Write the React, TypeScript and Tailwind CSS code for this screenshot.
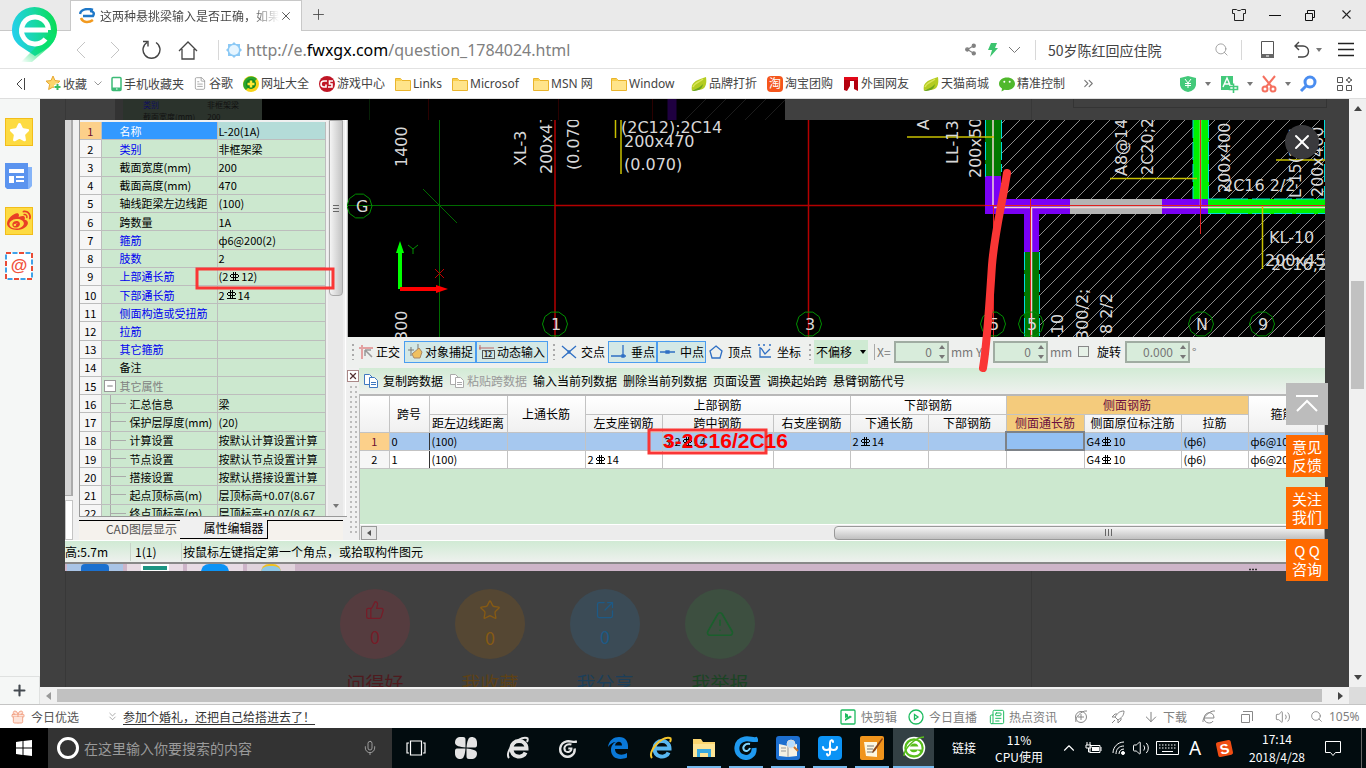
import React from 'react';
import {
  AlertTriangle, ArrowDown, ChevronDown, ChevronsDown, ChevronsRight, ChevronUp, FileText, Gift, Mic,
  Minus, Newspaper, Plus, Search, Share2, SquareArrowOutUpRight, Star, ThumbsUp, Volume2, X,
} from 'lucide-react';
import { FaWeibo } from 'react-icons/fa';

const PROPS: { name: string; value: string; kind?: 'blue' | 'group' | 'child' }[] = [
  { name: '名称', value: 'L-20(1A)' },
  { name: '类别', value: '非框架梁', kind: 'blue' },
  { name: '截面宽度(mm)', value: '200' },
  { name: '截面高度(mm)', value: '470' },
  { name: '轴线距梁左边线距', value: '(100)' },
  { name: '跨数量', value: '1A' },
  { name: '箍筋', value: 'ф6@200(2)', kind: 'blue' },
  { name: '肢数', value: '2', kind: 'blue' },
  { name: '上部通长筋', value: '(2#12)', kind: 'blue' },
  { name: '下部通长筋', value: '2#14', kind: 'blue' },
  { name: '侧面构造或受扭筋', value: '', kind: 'blue' },
  { name: '拉筋', value: '', kind: 'blue' },
  { name: '其它箍筋', value: '', kind: 'blue' },
  { name: '备注', value: '' },
  { name: '其它属性', value: '', kind: 'group' },
  { name: '汇总信息', value: '梁', kind: 'child' },
  { name: '保护层厚度(mm)', value: '(20)', kind: 'child' },
  { name: '计算设置', value: '按默认计算设置计算', kind: 'child' },
  { name: '节点设置', value: '按默认节点设置计算', kind: 'child' },
  { name: '搭接设置', value: '按默认搭接设置计算', kind: 'child' },
  { name: '起点顶标高(m)', value: '层顶标高+0.07(8.67', kind: 'child' },
  { name: '终点顶标高(m)', value: '层顶标高+0.07(8.67', kind: 'child' },
];

const SPANS = [
  ['0', '(100)', '', '', '3-2#14', '', '2#14', '', '', 'G4#10', '(ф6)', 'ф6@100', ''],
  ['1', '(100)', '', '2#14', '', '', '', '', '', 'G4#10', '(ф6)', 'ф6@200', ''],
];

// "#" stands for the grade-3 rebar mark
const RebarText = ({ text }: { text: string }) => (
  <span className="inline-flex items-center whitespace-nowrap">
    {text.split('#').map((part, i) => (
      <React.Fragment key={i}>
        {i > 0 && (
          <svg className="mx-px" width="11" height="11" viewBox="0 0 11 11" fill="none" stroke="currentColor">
            <path d="M4.500 1v8M6.500 1v8M2 3.500h7M2 6.500h7M1.500 4v2M9.500 4v2M1 9.500h9" />
          </svg>
        )}
        <span>{part}</span>
      </React.Fragment>
    ))}
  </span>
);

const Folder = () => (
  <svg width="16" height="16" viewBox="0 0 16 16">
    <path d="M.5 2.500h5l1.500 2h8.500v10H.5z" fill="#ffe48a" stroke="#e9b42c" />
    <path d="M1 3h4.300l1.500 2H1z" fill="#f9cf4b" />
  </svg>
);

const Leaf = () => (
  <svg width="16" height="16" viewBox="0 0 16 16">
    <path d="M1 15C-1 6 6 4 15 1c1 7 0 13-8 13-3 0-4-1-6 1z" fill="#b4cc22" />
    <path d="M1 15c3-2 8-3 11-7-1 6-5 7-11 7z" fill="#6ca51c" />
    <path d="M2 11C4 6 9 6 12 3" fill="none" stroke="#dbe65a" strokeWidth="1.500" />
  </svg>
);

const PhoneMark = () => (
  <svg width="12" height="16" viewBox="0 0 12 16" fill="none">
    <rect x="1" y="1.500" width="9" height="13" rx="1" stroke="#3dbb77" strokeWidth="1.500" />
    <path d="M1 11.500h9v3H1z" fill="#3dbb77" />
    <path d="M5 13h1.500" stroke="#fff" />
  </svg>
);

const StarMark = () => (
  <svg width="17" height="17" viewBox="0 0 17 17">
    <path d="M8 1l2 4.600 5 .5-3.700 3.400 1 5L8 12l-4.400 2.500 1-5L1 6.100l5-.5z" fill="#fcd56b" stroke="#e7a832" />
    <path d="M12.500 8.500v7M9 12h7" stroke="#fff" strokeWidth="4" />
    <path d="M12.500 9v6M9.500 12h6" stroke="#3dbb5f" strokeWidth="2" />
  </svg>
);

const SafeMark = () => (
  <svg width="16" height="16" viewBox="0 0 16 16">
    <circle cx="8" cy="8" r="8" fill="#f7d417" />
    <path d="M1 12A8 8 0 0 1 14 3L3 14z" fill="#2aa52c" />
    <circle cx="8" cy="8" r="5" fill="#148a21" />
    <path d="M8 4.500v7M4.500 8h7" stroke="#ffe936" strokeWidth="2.500" />
  </svg>
);

const GameMark = () => (
  <svg width="16" height="16" viewBox="0 0 16 16" fill="none">
    <circle cx="8" cy="8" r="8" fill="#c01626" />
    <path d="M8 5H5a3 3 0 0 0 0 6h2V8.500M14 5h-3.500v3H13v3H9" stroke="#fff" strokeWidth="1.600" />
  </svg>
);

const BannerMark = () => (
  <svg width="16" height="16" viewBox="0 0 16 16">
    <path d="M1 1h14v14l-4-2V5H7v5l-3 5-3-1z" fill="#b3000f" />
    <path d="M1 1h14v3H1z" fill="#e00818" />
  </svg>
);

const ChatMark = () => (
  <svg width="16" height="16" viewBox="0 0 16 16">
    <path d="M8 1.500c4.500 0 8 2.700 8 6.200s-3.500 6.300-8 6.300c-.8 0-1.600-.1-2.300-.3L2.500 15.500l.5-3C1.200 11.300 0 9.600 0 7.700 0 4.200 3.500 1.500 8 1.500z" fill="#50b82c" />
    <circle cx="5.300" cy="5.800" r="1" fill="#fff" />
    <circle cx="10.700" cy="5.800" r="1" fill="#fff" />
  </svg>
);

const TaoMark = () => <span className="grid size-4 place-items-center rounded-sm bg-[#f5561d] text-[12px] leading-none text-white">淘</span>;

const BOOKMARKS = [
  { icon: <FileText size={15} strokeWidth={1.2} color="#888" />, label: '谷歌', width: 'w-10' },
  { icon: <SafeMark />, label: '网址大全', width: 'w-[66px]' },
  { icon: <GameMark />, label: '游戏中心', width: 'w-[66px]' },
  { icon: <Folder />, label: 'Links', width: 'w-[47px]' },
  { icon: <Folder />, label: 'Microsof', width: 'w-[71px]' },
  { icon: <Folder />, label: 'MSN 网', width: 'w-[68px]' },
  { icon: <Folder />, label: 'Window', width: 'w-[70px]' },
  { icon: <Leaf />, label: '品牌打折', width: 'w-[66px]' },
  { icon: <TaoMark />, label: '淘宝团购', width: 'w-[66px]' },
  { icon: <BannerMark />, label: '外国网友', width: 'w-[70px]' },
  { icon: <Leaf />, label: '天猫商城', width: 'w-[66px]' },
  { icon: <ChatMark />, label: '精准控制', width: 'w-[66px]' },
];

const BrowserLogo = () => (
  <svg className="absolute left-3 top-1.5 z-10" width="46" height="58" viewBox="0 0 46 58">
    <defs>
      <linearGradient id="pin" x1="0" y1="0.600" x2="1" y2="0.400">
        <stop offset="0" stopColor="#25cff0" />
        <stop offset="0.550" stopColor="#18d8a4" />
        <stop offset="1" stopColor="#08dd55" />
      </linearGradient>
      <linearGradient id="tail" x1="1" y1="0" x2="0" y2="1">
        <stop offset="0.300" stopColor="#08e06b" />
        <stop offset="1" stopColor="#08e06b" stopOpacity="0" />
      </linearGradient>
    </defs>
    <path d="M22.500 1A22.500 22.500 0 0 1 45 24c0 8-4 13-8 17L23 50 8 40C3 36 0 31 0 24A22.500 22.500 0 0 1 22.500 1z" fill="url(#pin)" />
    <path d="M44 28c-1 7-5 11-8 14L20 56H9l28-28z" fill="url(#tail)" />
    <path d="M11 24h25M36.500 24a13.500 13.500 0 1 0-3 9" fill="none" stroke="#fff" strokeWidth="5" />
  </svg>
);

const Caret = () => <svg width="6" height="4" viewBox="0 0 6 4"><path d="M0 0h6L3 4z" fill="#777" /></svg>;

const TabStrip = () => (
  <div className="flex h-[31px] shrink-0 items-end border-b border-[#c8c8c8] bg-[#eaeaea]">
    <div className="-mb-px ml-[70px] flex h-[31px] w-[232px] items-center border-x border-t border-[#c8c8c8] bg-white pl-2 pr-2">
      <svg width="16" height="16" viewBox="0 0 16 16" fill="none">
        <path d="M1 6C2 1 9 0 14 2M4 8h10c2-3 0-5-3-5" stroke="#1f78c8" strokeWidth="2.500" />
        <path d="M2 10c2 5 8 5 12 2" stroke="#f29a1f" strokeWidth="2.500" />
      </svg>
      <span className="ml-[5px] w-[180px] overflow-hidden whitespace-nowrap bg-gradient-to-r from-[#444] from-85% to-transparent bg-clip-text text-xs text-transparent">这两种悬挑梁输入是否正确，如果</span>
      <button aria-label="关闭标签" className="ml-auto"><X size={14} strokeWidth={1.5} color="#444" /></button>
    </div>
    <button aria-label="新标签" className="mb-[7px] ml-2"><Plus size={17} strokeWidth={1.2} color="#444" /></button>
    <div className="mb-2 ml-auto mr-3 flex items-center gap-[23px] text-[#222]">
      <button aria-label="皮肤">
        <svg width="14" height="14" viewBox="0 0 14 14" fill="none" stroke="currentColor"><path d="M4.500 1.500h-4v4h2v7h9v-7h2v-4h-4c-1 1.500-4 1.500-5 0z" /></svg>
      </button>
      <button aria-label="最小化"><svg width="12" height="12"><path d="M0 6.500h12" stroke="#111" /></svg></button>
      <button aria-label="还原"><svg width="12" height="12" viewBox="0 0 12 12" fill="none" stroke="#111"><path d="M1.500 4.500h7v7h-7zM3.500 4V1.500h7v7H9" /></svg></button>
      <button aria-label="关闭"><X size={15} strokeWidth={1.7} /></button>
    </div>
  </div>
);

const AddressBar = () => (
  <div className="flex h-[38px] shrink-0 items-center border-b border-[#e2e2e2] pl-[72px] pr-3">
    <button aria-label="后退" className="w-[18px]"><svg width="18" height="18" viewBox="0 0 18 18" fill="none" stroke="#c4c4c4"><path d="M13 1L5 9l8 8" /></svg></button>
    <button aria-label="前进" className="ml-4 w-[18px]"><svg width="18" height="18" viewBox="0 0 18 18" fill="none" stroke="#c4c4c4"><path d="M5 1l8 8-8 8" /></svg></button>
    <button aria-label="刷新" className="ml-[18px]">
      <svg width="20" height="20" viewBox="0 0 20 20" fill="none" stroke="#444" strokeWidth="1.400"><path d="M5 2.500A8.500 8.500 0 1 0 14 2.500M1 1.500h5v5" /></svg>
    </button>
    <button aria-label="主页" className="ml-4">
      <svg width="20" height="20" viewBox="0 0 20 20" fill="none" stroke="#444" strokeWidth="1.300"><path d="M1 11l9-9 9 9M4 9v10h12V9" /></svg>
    </button>
    <span className="ml-5 h-5 w-px bg-[#d8d8d8]" />
    <svg className="ml-[7px]" width="16" height="16" viewBox="0 0 16 16">
      <path d="M8 0l2 2h4v4l2 2-2 2v4h-4l-2 2-2-2H2v-4L0 8l2-2V2h4z" fill="#8cc9f5" />
      <circle cx="8" cy="8" r="5" fill="#e6f5ff" />
    </svg>
    <p className="ml-1 flex-1 whitespace-nowrap font-['Noto_Sans'] text-base text-[#808080]">http://e.<span className="text-black">fwxgx.com</span>/question_1784024.html</p>
    <div className="flex items-center gap-2.5">
      <Share2 size={13} color="#808080" fill="#808080" />
      <svg width="11" height="14" viewBox="0 0 11 14"><path d="M4 0h6L8 5h3L3 14l2-7H1z" fill="#3cc46e" /></svg>
      <svg width="13" height="8" viewBox="0 0 13 8" fill="none" stroke="#777"><path d="M1 1l5.500 5.500L12 1" /></svg>
    </div>
    <span className="ml-3.5 h-5 w-px bg-[#d8d8d8]" />
    <input aria-label="搜索" defaultValue="50岁陈红回应住院" className="ml-3 w-[166px] text-sm text-[#444] outline-none" />
    <Search size={15} strokeWidth={1.2} color="#888" />
    <span className="ml-3 mr-[19px] h-5 w-px bg-[#d8d8d8]" />
    <svg width="13" height="17" viewBox="0 0 13 17"><path d="M.5.5h12v16H.5z" fill="none" stroke="#555" /><path d="M0 13h13v4H0z" fill="#666" /><path d="M5 15h3" stroke="#fff" /></svg>
    <svg className="ml-5" width="16" height="17" viewBox="0 0 16 17" fill="none" stroke="#444" strokeWidth="1.400"><path d="M5 1L1 5l4 4M1 5h8a5.500 5.500 0 0 1 0 11H4" /></svg>
    <span className="ml-1.5"><Caret /></span>
    <button aria-label="菜单" className="ml-4"><svg width="16" height="15"><path d="M0 1.500h16M0 7.500h16M0 13.500h16" stroke="#222" strokeWidth="1.300" /></svg></button>
  </div>
);

const BookmarkBar = () => (
  <div className="flex h-[30px] shrink-0 items-center border-b border-[#dedede] pl-[15px] pr-[13px] text-xs text-[#444]">
    <svg width="12" height="12" viewBox="0 0 12 12" fill="none" stroke="#444"><path d="M7 1L2 6l5 5M9.500 0v12" /></svg>
    <a href="#fav" className="ml-[18px] flex w-[49px] items-center gap-px"><StarMark />收藏</a>
    <svg width="8" height="5" viewBox="0 0 8 5" fill="none" stroke="#999"><path d="M.5.5L4 4 7.500.5" /></svg>
    <a href="#phone" className="ml-[9px] flex items-center gap-px"><PhoneMark />手机收藏夹</a>
    <nav className="ml-[9px] flex gap-2.5">
      {BOOKMARKS.map(b => (
        <a key={b.label} href="#bookmark" className={`${b.width} flex shrink-0 items-center gap-0.5 whitespace-nowrap font-['Noto_Sans','Noto_Sans_CJK_SC']`}>{b.icon}{b.label}</a>
      ))}
    </nav>
    <ChevronsRight className="ml-4" size={15} strokeWidth={1.7} color="#777" />
    <div className="ml-auto flex items-center gap-2">
      <svg width="18" height="18" viewBox="0 0 18 18"><path d="M9 1l8 2v6c0 4-3 7-8 8-5-1-8-4-8-8V3z" fill="#43c97a" /><path d="M6 4l3 4 3-4M9 8v5M6 8.500h6M6 10.500h6" stroke="#fff" fill="none" /></svg>
      <Caret />
      <svg width="20" height="18" viewBox="0 0 20 18">
        <path d="M2 1h12v9h-4v5H2z" fill="#43c97a" />
        <path d="M4 12l4-9 3 7M5.500 9H10" stroke="#fff" fill="none" strokeWidth="1.400" />
        <path d="M14.500 8.500V18M10.500 11.500h8v3h-8z" stroke="#43c97a" fill="#fff" strokeWidth="1.600" />
      </svg>
      <Caret />
      <svg width="16" height="18" viewBox="0 0 16 18" fill="none" stroke="#f5705f" strokeWidth="2"><path d="M2 1l9 11M14 1L5 12" /><circle cx="4" cy="14" r="2.500" /><circle cx="12" cy="14" r="2.500" /></svg>
      <Caret />
      <svg width="18" height="18" viewBox="0 0 18 18" fill="none" stroke="#4a8df0" strokeWidth="3"><circle cx="11" cy="7" r="5" /><path d="M7 11l-5 5" /></svg>
      <svg className="ml-3" width="16" height="16" viewBox="0 0 16 16" fill="none" stroke="#555"><path d="M.5 1.500h5v5h-5zM.5 9.500h5v5h-5zM9.500 9.500h5v5h-5zM12 1l1 2 2 1-2 1-1 2-1-2-2-1 2-1z" /></svg>
    </div>
  </div>
);

const Sidebar = () => (
  <aside className="flex w-10 shrink-0 flex-col bg-[#f5f7f6]">
    <div className="flex flex-col items-start gap-[17px] pl-[5px] pt-[19px]">
      <button aria-label="收藏" className="grid size-7 place-items-center border border-[#f2bd1a] bg-[#fddb42]"><Star size={21} color="#fff" fill="#fff" /></button>
      <button aria-label="新闻">
        <svg width="28" height="27" viewBox="0 0 28 27"><path d="M20 4h7v19l-3 3H3z" fill="#85b4f8" /><path d="M0 0h23v26H2l-2-2z" fill="#5b94ef" /><path d="M4 6h15v4H4zM4 13h5v7H4zM11 13h8v2h-8zM11 17h8v2h-8z" fill="#fff" /></svg>
      </button>
      <button aria-label="微博" className="grid size-7 place-items-center border border-[#f2bd1a] bg-[#fddb42]"><FaWeibo size={24} color="#e94025" /></button>
      <button aria-label="邮箱">
        <svg width="28" height="28" viewBox="0 0 28 28">
          <rect x="1" y="1" width="26" height="26" fill="#fff" stroke="#e94b35" strokeWidth="2" strokeDasharray="5 8" />
          <rect x="1" y="1" width="26" height="26" fill="none" stroke="#3fa2e8" strokeWidth="2" strokeDasharray="5 8" strokeDashoffset="-6.500" />
          <text x="14" y="19" fontSize="17" fontWeight="bold" textAnchor="middle" fill="#f0523c" fontFamily="Liberation Sans, sans-serif">@</text>
        </svg>
      </button>
    </div>
    <button aria-label="添加" className="mt-auto grid h-7 place-items-center border-r border-t border-[#dfe1e0]"><Plus size={17} strokeWidth={3} color="#444a50" /></button>
  </aside>
);

const ACTIONS = [
  { label: '问得好', count: '0', icon: <ThumbsUp size={20} strokeWidth={1.5} />, disc: 'bg-[#553c3f]', ink: 'text-[#761c28]', caption: 'text-[#4f1a1e]' },
  { label: '我收藏', count: '0', icon: <Star size={22} strokeWidth={1.5} />, disc: 'bg-[#554733]', ink: 'text-[#865a14]', caption: 'text-[#5e4216]' },
  { label: '我分享', count: '0', icon: <SquareArrowOutUpRight size={20} strokeWidth={1.5} />, disc: 'bg-[#3b4b56]', ink: 'text-[#1d5a86]', caption: 'text-[#1c3f5a]' },
  { label: '我举报', count: '', icon: <AlertTriangle size={30} strokeWidth={1.3} />, disc: 'bg-[#3d4f40]', ink: 'text-[#1a5f2c]', caption: 'text-[#1b4424]' },
];

const DimmedPage = () => (
  <div className="absolute inset-0 flex flex-col justify-between overflow-hidden bg-[#404040]">
    <div className="absolute inset-y-0 left-[25px] w-[967px] border-x border-[#383838]" />
    <div className="relative flex h-6 items-start justify-between pl-[75px] pr-[22px]">
      <div className="flex h-6 w-[670px] bg-black text-[8px] leading-3 text-[#111]">
        <div className="w-[147px] border-l-8 border-[#333] bg-[#2b332c] pl-5">
          <p><span className="mr-12 text-[#10105c]">类别</span>非框架梁</p>
          <p>截面宽度(mm)<span className="ml-3">200</span></p>
        </div>
        <svg className="flex-1" height="24" fill="none">
          <path d="M107.500 0v24" stroke="#062006" />
          <path d="M166.500 0v24M296.500 0v24M390.500 0v24" stroke="#2a0000" />
          <path d="M410 0v24" stroke="#1f0040" strokeWidth="9" />
          <path d="M420 24l24-24M440 24l24-24M460 24l24-24M480 24l24-24M500 24l24-24" stroke="#1c1c1c" />
        </svg>
      </div>
      <div className="h-[9px] w-[254px] border-x border-b border-[#343434]" />
    </div>
    <div className="relative flex h-[98px] gap-[45px] pl-[300px]">
      {ACTIONS.map(a => (
        <div key={a.label} className="flex w-[70px] shrink-0 flex-col items-center">
          <button className={`${a.disc} ${a.ink} flex h-[70px] w-[70px] shrink-0 flex-col items-center justify-center rounded-full text-lg leading-6`}>
            {a.icon}
            {a.count && <span className="mt-1">{a.count}</span>}
          </button>
          <span className={`${a.caption} mt-2.5 whitespace-nowrap text-[19px] leading-7`}>{a.label}</span>
        </div>
      ))}
    </div>
  </div>
);

const PropertyPanel = () => (
  <div className="flex w-[282px] shrink-0 bg-[#f0f0f0]">
    <div className="flex w-3.5 flex-col">
      <div className="h-[376px] w-2 border-b border-r-2 border-[#aaa] bg-[#d5d5d5]" />
      <div className="mt-1 w-2 flex-1 border border-[#c4c4c4] bg-white" />
    </div>
    <div className="flex flex-1 flex-col">
      <div className="flex h-[397px] overflow-hidden border-b border-l border-[#999]">
        <table className="mt-0.5 h-[401px] w-[246px] table-fixed border-collapse text-[11px] leading-4 text-black">
          <tbody>
            {PROPS.map((p, i) => (
              <tr key={p.name} className="bg-[#cce8cf]">
                <td className={`w-[21px] border-b border-r border-[#bdbdbd] p-0 text-center ${i === 0 ? 'bg-[#fcd08a] text-[#6b1030]' : 'bg-[#f6f6f6]'}`}>{i + 1}</td>
                <td className={`relative w-[116px] overflow-hidden whitespace-nowrap border-b border-r border-[#bdbdbd] p-0 ${p.kind === 'child' ? 'pl-7' : 'pl-[18px]'} ${i === 0 ? 'bg-[#3399ff] text-white' : ''} ${p.kind === 'blue' ? 'text-[#0000f0]' : ''} ${p.kind === 'group' ? 'text-[#808080]' : ''}`}>
                  {p.kind === 'group' && (
                    <button aria-label="折叠" className="absolute left-0.5 top-[3px] grid size-3 place-items-center border border-[#999] bg-white"><Minus size={8} color="#333" /></button>
                  )}
                  {p.kind === 'child' && (
                    <span className="absolute inset-y-0 left-2 w-4 border-l border-[#aaa]"><span className="mt-2 block h-px bg-[#aaa]" /></span>
                  )}
                  {p.name}
                </td>
                <td className={`overflow-hidden border-b border-r border-[#bdbdbd] p-0 pl-px ${i === 0 ? 'bg-[#b4dcd8]' : ''}`}><RebarText text={p.value} /></td>
              </tr>
            ))}
          </tbody>
        </table>
        <div className="ml-0.5 flex w-[15px] flex-col items-center justify-between bg-[#e8e8e8]">
          <div className="grid h-[176px] w-[14px] place-items-center rounded-b-sm border border-[#a8a8a8] bg-gradient-to-r from-[#f4f4f4] to-[#c4c4c4]">
            <svg width="6" height="8"><path d="M0 1.500h6M0 4.500h6M0 7.500h6" stroke="#666" /></svg>
          </div>
          <span className="mb-2"><Caret /></span>
        </div>
        <div className="ml-0.5 w-px bg-white" />
      </div>
      <div className="mr-1 mt-[3px] flex h-5 items-start border-t border-black bg-[#f5f2ed] text-[12px] leading-4">
        <button className="h-[19px] w-[101px] pb-1 pl-6 text-[#555]">CAD图层显示</button>
        <button className="-mt-px h-[19px] w-[88px] border-b border-r border-black bg-[#f0f0f0] pb-1 pl-5 text-black">属性编辑器</button>
      </div>
    </div>
  </div>
);

const AXES: [number, string][] = [[555, '1'], [809, '3'], [993, '5'], [1031, '5'], [1201, 'N'], [1262, '9']];

const UPRIGHT: [number, number, string][] = [
  [407, 167, '1400'], [407, 341, '300'], [526, 166, 'XL-3'], [552, 174, '200x470'], [579, 170, '(0.070)'],
  [929, 130, 'A'], [958, 164, 'LL-13'], [981, 178, '200x500'], [1127, 176, 'A8@14'], [1153, 175, '2C20;2'],
  [1230, 193, '200x400'], [1301, 198, 'L-15(2C1'], [1323, 197, '200x400'], [1063, 340, '-10'], [1088, 340, '300/2;'], [1112, 334, '8 2/2'],
];

const LEVEL: [number, number, string][] = [
  [621, 133, '(2C12);2C14'], [624, 147, '200x470'], [624, 170, '(0.070)'],
  [1223, 191, '2C16 2/2'], [1269, 243, 'KL-10'], [1265, 266, '200x450'], [1271, 270, '2C16;2'],
];

const ring = (cx: number, cy: number) =>
  Array.from({ length: 10 }, (_, i) => `${cx + 12.5 * Math.cos((i * Math.PI) / 5)},${cy + 12.5 * Math.sin((i * Math.PI) / 5)}`).join(' ');

const Drawing = () => (
  <svg className="block h-[217px] w-full bg-black" fontFamily="DejaVu Sans, sans-serif" fontSize="16">
    <defs>
      <pattern id="hatch" width="15" height="15" patternUnits="userSpaceOnUse">
        <path d="M-1 16L16 -1M-1 1L1 -1M14 16L16 14" stroke="#8c8c8c" />
      </pattern>
    </defs>
    <g transform="translate(-347 -120)" fill="none">
      <path d="M1001 120h192v79h-192zM1208 120h117v79h-117zM1039 214h286v123h-286z" fill="url(#hatch)" />
      <path d="M347.500 120v217" stroke="#bbb" />
      <path d="M347 205.500h208M439.500 120v217M423 189l34 34" stroke="#006a00" />
      <path d="M555 205.500h431M555 120v217M808.500 120v217" stroke="#b40000" strokeWidth="1.500" />
      <g fill="#007800">
        <path d="M985 120h16v57h-16zM1024 252h15v85h-15z" />
        <path d="M1193 120h16v79h-16zM1208 199h117v15h-117z" fill="#00f000" />
        <path d="M985 176h16v23h69v15h-31v38h-15v-38h-39zM1162 199h46v15h-46z" fill="#7a00f5" />
        <path d="M1070 199h92v15h-92z" fill="#b4b4b4" />
      </g>
      <path d="M985.500 120v57M1001.500 120v52M1024.500 252v85M1039.500 252v85M1193 120v79M1208.500 120v79M1208 199h117M1208 213.500h117M1324.500 120v79" stroke="#00dcdc" strokeDasharray="18 4" />
      <path d="M993 120v86M1200.500 120v86M994 207.500h331M1031.500 207v130" stroke="#f2d6d6" strokeWidth="1.500" />
      <path d="M985 205.500h340M993.500 206v131M1030.500 199v138M1200.500 120v114" stroke="#e02020" />
      <path d="M615.500 120v18M621 120v54M907 137h87M1110 178.500h87M1276 160h49M1262.500 206v63" stroke="#c8c000" strokeWidth="1.500" />
      <g fill="#d8d8d8">
        {UPRIGHT.map(([x, y, t]) => <text key={`${x}-${y}`} transform={`translate(${x} ${y}) rotate(-90)`}>{t}</text>)}
        {LEVEL.map(([x, y, t]) => <text key={`${x}-${y}`} x={x} y={y}>{t}</text>)}
        <text x="356" y="212">G</text>
        {AXES.map(([x, t]) => <text key={x} x={x + 1} y="330" textAnchor="middle">{t}</text>)}
      </g>
      <g stroke="#009000">
        <polygon points={ring(359.5, 206)} />
        {AXES.map(([x]) => <polygon key={x} points={ring(x, 324)} />)}
        <path d="M408 245l5 4 5-4M413 249v5" />
      </g>
      <path d="M400 289v-36" stroke="#00ff00" strokeWidth="4" />
      <path d="M396 253l4-12 4 12z" fill="#00ff00" />
      <path d="M400 289h38" stroke="#ff0000" strokeWidth="4" />
      <path d="M436 285l12 4-12 4z" fill="#ff0000" />
      <path d="M435 269l9 9M444 269l-9 9" stroke="#c00000" />
    </g>
  </svg>
);

const Grip = () => (
  <svg className="shrink-0" width="4" height="18"><path d="M2 1v16" stroke="#aaa" strokeWidth="2" strokeDasharray="2 3" /></svg>
);

const SnapIcon = ({ d }: { d: string }) => (
  <svg className="shrink-0" width="16" height="16" viewBox="0 0 16 16" fill="none" stroke="#2f6fc4" strokeWidth="1.300"><path d={d} /></svg>
);

const SNAPS = [
  { label: '交点', d: 'M1 2l14 12M15 2L1 14M7 7h2v2H7z', on: false },
  { label: '垂点', d: 'M0 12h15M12 1v11M11 11h2v2h-2z', on: true },
  { label: '中点', d: 'M0 8h15M6 7h3v2H6z', on: true },
  { label: '顶点', d: 'M8 2l6 5-2 7H4L2 7z', on: false },
  { label: '坐标', d: 'M3 3v10h11M4 4l4 6 5-5M1 1h2M6 1h2M12 1h2', on: false },
];

const Spin = ({ label, value, wide }: { label: string; value: string; wide?: boolean }) => (
  <span className="flex h-[22px] items-center border-2 border-[#a0aca2] bg-[#d8ecdb] pr-0.5">
    <input aria-label={label} defaultValue={value} className={`${wide ? 'w-[46px]' : 'w-9'} text-right text-[12px] text-[#777] outline-none`} />
    <svg className="ml-[7px]" width="6" height="14" viewBox="0 0 6 14" fill="#777"><path d="M0 4h6L3 0zM0 10h6l-3 4z" /></svg>
  </span>
);

const SnapToolbar = () => (
  <div className="flex h-[31px] items-center bg-[#eef0ee] pb-0.5 pl-1 text-[12px] text-black">
    <Grip />
    <button className="ml-[3px] flex w-[46px] items-center gap-0.5">
      <svg width="16" height="16" viewBox="0 0 16 16" fill="none"><path d="M1 4h14M4 1v14" stroke="#e3a1a1" strokeWidth="2" /><path d="M7 6l7 7M7 6v6M7 6h6" stroke="#999" strokeWidth="1.500" /></svg>
      正交
    </button>
    <button className="flex h-[22px] w-[72px] items-center gap-0.5 border border-[#4a9df0] bg-[#d3e8e6] px-0.5">
      <svg width="16" height="16" viewBox="0 0 16 16"><path d="M1 6h6M4 3v9M11 0v5" stroke="#777" /><path d="M5 10l7-6 3 4-2 6H7z" fill="#f0c060" stroke="#a86" /></svg>
      <span className="whitespace-nowrap">对象捕捉</span>
    </button>
    <button className="flex h-[22px] w-[72px] items-center gap-0.5 border border-[#4a9df0] bg-[#d3e8e6] px-0.5">
      <svg width="16" height="16" viewBox="0 0 16 16" fill="none"><path d="M1 1v5M0 4h15" stroke="#b66" /><rect x="3.500" y="6.500" width="12" height="8" stroke="#555" /><text x="5" y="13" fontSize="7" fontWeight="bold" fill="#222">12</text></svg>
      <span className="whitespace-nowrap">动态输入</span>
    </button>
    <span className="ml-1 mr-[3px]"><Grip /></span>
    {SNAPS.map(s => (
      <button key={s.label} className={`flex h-[22px] w-[49px] shrink-0 items-center gap-1 whitespace-nowrap px-0.5 ${s.on ? 'border border-[#4a9df0] bg-[#d3e8e6]' : ''}`}>
        <SnapIcon d={s.d} />{s.label}
      </button>
    ))}
    <span className="ml-1 mr-0.5"><Grip /></span>
    <span className="flex h-6 items-center bg-[#cfead3]">
      <select aria-label="偏移方式" className="w-[46px] appearance-none pl-0.5 outline-none"><option>不偏移</option></select>
      <svg className="mr-0.5" width="6" height="4"><path d="M0 0h6L3 4z" /></svg>
    </span>
    <span className="ml-1.5 h-4 w-px bg-[#aaa]" />
    <div className="flex items-center whitespace-nowrap text-[#777]">
      <span className="w-[19px] pl-0.5">X=</span><Spin label="X" value="0" />
      <span className="w-11 pl-0.5">mm&nbsp;Y=</span><Spin label="Y" value="0" />
      <span className="w-6 pl-0.5">mm</span>
    </div>
    <label className="ml-1.5 flex items-center gap-2 whitespace-nowrap"><input type="checkbox" className="size-[11px] appearance-none border border-[#888] bg-[#e6f1e7]" />旋转</label>
    <span className="ml-1"><Spin label="旋转角度" value="0.000" wide /></span>
    <span className="ml-0.5 text-[#777]">°</span>
  </div>
);

const PageIcon = ({ muted }: { muted?: boolean }) => (
  <svg width="16" height="14" viewBox="0 0 16 14" fill="#fff" stroke={muted ? '#aaa' : '#3f78c0'}>
    <path d="M1.500.5h5l3 3v7h-8z" />
    <path d="M6.500 3.500h5l3 3v7h-8zM8 8.500h5M8 10.500h5" />
  </svg>
);

const SpanToolbar = () => (
  <div className="flex h-[26px] items-center gap-1.5 bg-gradient-to-b from-[#d2ebd5] to-[#eff1ef] pl-1 text-[12px] text-black [&>button]:shrink-0">
    <button className="flex items-center gap-1"><PageIcon />复制跨数据</button>
    <button className="flex items-center gap-0.5 text-[#999]" disabled><PageIcon muted />粘贴跨数据</button>
    <button>输入当前列数据</button>
    <button>删除当前列数据</button>
    <button>页面设置</button>
    <button>调换起始跨</button>
    <button>悬臂钢筋代号</button>
  </div>
);

const GROUPS = [
  { text: '', rows: 2 }, { text: '跨号', rows: 2 }, { text: '' }, { text: '上通长筋', rows: 2 }, { text: '上部钢筋', cols: 3 },
  { text: '下部钢筋', cols: 2 }, { text: '侧面钢筋', cols: 3, hot: true }, { text: '箍筋', rows: 2 }, { text: '', rows: 2 },
];

const SUBHEADS = ['距左边线距离', '左支座钢筋', '跨中钢筋', '右支座钢筋', '下通长筋', '下部钢筋', '侧面通长筋', '侧面原位标注筋', '拉筋'];

const head = 'border-b border-r border-[#c3c3c3] p-0 font-normal whitespace-nowrap overflow-hidden';

const SpanTable = () => (
  <table className="w-full table-fixed border-collapse text-[11px] leading-4 text-black">
    <colgroup>
      <col className="w-[29px]" /><col className="w-10" /><col className="w-[78px]" /><col className="w-[78px]" />
      <col className="w-[77px]" /><col className="w-[111px]" /><col className="w-[77px]" /><col className="w-[78px]" />
      <col className="w-[78px]" /><col className="w-[78px]" /><col className="w-[97px]" /><col className="w-[67px]" />
      <col className="w-[69px]" /><col />
    </colgroup>
    <thead className="bg-gradient-to-b from-white to-[#f0f0f0] text-[12px]">
      <tr className="h-[18px]">
        {GROUPS.map((g, i) => <th key={i} rowSpan={g.rows} colSpan={g.cols} className={`${head} ${g.hot ? 'bg-[#f4cb7c] text-[#6b1040]' : ''}`}>{g.text}</th>)}
      </tr>
      <tr className="h-[18px]">
        {SUBHEADS.map(t => <th key={t} className={`${head} ${t === '侧面通长筋' ? 'bg-[#f4cb7c] text-[#6b1040]' : ''}`}>{t}</th>)}
      </tr>
    </thead>
    <tbody>
      {SPANS.map((row, r) => (
        <tr key={r} className={`h-[18px] ${r === 0 ? 'bg-[#a6c8ef]' : 'bg-white'}`}>
          <th className={`${head} ${r === 0 ? 'bg-[#fcd08a] text-[#6b1030]' : 'bg-[#f6f6f6]'}`}>{r + 1}</th>
          {row.map((v, c) => (
            <td key={c} className={`overflow-hidden border-b border-r border-[#c3c3c3] p-0 pl-0.5 ${c === 0 ? 'border-r-[#333]' : ''} ${r === 0 && c === 8 ? 'bg-[#93c0f3] outline-2 -outline-offset-1 outline-[#7d8288]' : ''}`}>
              <RebarText text={v} />
            </td>
          ))}
        </tr>
      ))}
    </tbody>
  </table>
);

const Screenshot = () => (
  <div className="relative overflow-hidden bg-[#f0f0f0]">
    <div className="flex">
      <PropertyPanel />
      <div className="flex min-w-0 flex-1 flex-col">
        <Drawing />
        <SnapToolbar />
        <div className="flex flex-1">
          <div className="w-3 shrink-0 pt-0.5">
            <button aria-label="关闭面板" className="grid size-3 place-items-center border border-[#a88] bg-white"><X size={10} strokeWidth={3} color="#533" /></button>
            <svg width="12" height="156"><path d="M4 4v150M9 4v150" stroke="#bbb" strokeWidth="2" strokeDasharray="2 3" /></svg>
          </div>
          <div className="flex min-w-0 flex-1 flex-col">
            <SpanToolbar />
            <div className="flex flex-1 flex-col border-l border-t-2 border-[#b8b8b8] bg-[#cce8cf]">
              <SpanTable />
              <div className="mt-auto flex h-4 items-center border-t border-white bg-[#ececec]">
                <button aria-label="向左" className="ml-px grid h-3.5 w-4 place-items-center border border-[#999] bg-[#e6e6e6]"><svg width="4" height="6"><path d="M4 0v6L0 3z" fill="#555" /></svg></button>
                <div className="ml-[457px] grid h-3.5 flex-1 place-items-center rounded-l-sm border border-[#999] bg-gradient-to-b from-[#f5f5f5] to-[#c0c0c0]">
                  <svg className="ml-[58px]" width="9" height="7"><path d="M1.500 0v7M4.500 0v7M7.500 0v7" stroke="#666" /></svg>
                </div>
              </div>
            </div>
          </div>
        </div>
      </div>
    </div>
    <div className="flex h-[22px] items-center whitespace-nowrap border-t border-white bg-gradient-to-b from-[#d0ead4] to-[#eef1ee] text-[12px] text-black">
      <span className="w-[66px] border-r border-[#c8d4c9]">高:5.7m</span>
      <span className="ml-px w-[50px] border-r border-[#c8d4c9] pl-[3px]">1(1)</span>
      <span className="ml-px">按鼠标左键指定第一个角点，或拾取构件图元</span>
    </div>
    <div className="flex h-[9px] gap-1 border-t-2 border-[#888] bg-[#cdb4c8] pl-0.5">
      <span className="flex w-14 justify-center bg-[#a9c4e6]"><i className="h-2 w-7 rounded-t-sm bg-[#1b70cf]" /></span>
      <span className="flex w-14 justify-center bg-[#e8dbe4]"><i className="h-2 w-7 border-2 border-white bg-[#1c9482]" /></span>
      <span className="flex w-14 justify-center bg-[#e8dbe4]"><i className="h-2 w-7 rounded-t-lg bg-[#0b93f5]" /></span>
      <span className="flex w-12 justify-center bg-[#e0d3dc]"><i className="h-2 w-5 rounded-t-lg border-t-2 border-[#f0c020] bg-[#8fc8e8]" /></span>
      <svg className="ml-auto mr-[68px]" width="8" height="7"><path d="M0 5.500h8" stroke="#333" strokeWidth="1.500" strokeDasharray="2 1" /></svg>
    </div>
    <svg className="pointer-events-none absolute inset-0 h-full w-full" fill="none" stroke="#fa3635">
      <rect x="132" y="149" width="136" height="19" strokeWidth="3" />
      <rect x="584" y="310" width="117" height="23" strokeWidth="3" />
      <path d="M942 53C936 90 930 110 927 145C924 190 922 225 918 248" strokeWidth="8" strokeLinecap="round" />
      <text x="598" y="328" fontFamily="Liberation Sans, sans-serif" fontSize="21" fontWeight="bold" fill="#ff0000" stroke="none">3-2C16/2C16</text>
    </svg>
    <button aria-label="关闭图片" className="absolute right-1.5 top-[5px] grid size-[34px] place-items-center rounded-full bg-[#3a3a3d]"><X size={24} color="#fff" /></button>
  </div>
);

const FloatButtons = () => (
  <div className="absolute right-[21px] top-[284px] flex w-[42px] flex-col gap-2.5 text-[15px] leading-[18px] text-white">
    <button aria-label="回到顶部" className="grid h-[42px] place-items-center bg-[#bcbcbc]">
      <svg width="22" height="18" viewBox="0 0 22 18" fill="none" stroke="#fff" strokeWidth="2"><path d="M0 1h22M1 16L11 6l10 10" /></svg>
    </button>
    <button className="h-[42px] bg-[#ff6a00] px-1">意见反馈</button>
    <button className="h-[42px] bg-[#ff6a00] px-1">关注我们</button>
    <button className="h-[42px] bg-[#ff6a00] px-1">Q Q<br />咨询</button>
  </div>
);

const VerticalScroll = () => (
  <div className="flex w-[17px] shrink-0 flex-col items-center bg-[#f0f0f0] py-[7px]">
    <svg width="8" height="5"><path d="M0 5h8L4 0z" fill="#444" /></svg>
    <div className="mt-[170px] h-[108px] w-[13px] bg-[#c1c1c1]" />
    <svg className="mt-auto" width="8" height="5"><path d="M0 0h8L4 5z" fill="#444" /></svg>
  </div>
);

const StatusBar = () => (
  <footer className="flex h-6 shrink-0 items-center border-t border-[#c4c4c4] bg-white pl-2.5 pr-[5px] text-xs text-[#808080]">
    <Gift size={16} strokeWidth={1.3} color="#f0997a" fill="#fde4da" />
    <span className="ml-[5px] text-[#555]">今日优选</span>
    <ChevronsDown className="ml-[27px]" size={13} strokeWidth={1.2} />
    <a href="#news" className="ml-1 text-[#333] underline underline-offset-2">参加个婚礼，还把自己给搭进去了！</a>
    <div className="ml-auto flex items-center whitespace-nowrap">
      <svg width="16" height="16" viewBox="0 0 16 16" fill="none" stroke="#1dbb5f" strokeWidth="1.300"><rect x="1" y="1" width="14" height="14" rx="1" /><path d="M5 4l3 1.500V8L5 9zM5 12l7-4-2-1.500L5 10z" fill="#1dbb5f" stroke="none" /></svg>
      <span className="ml-[5px]">快剪辑</span>
      <svg className="ml-[11px]" width="16" height="16" viewBox="0 0 16 16" fill="none" stroke="#1dbb5f" strokeWidth="1.300"><circle cx="8" cy="8" r="7" /><path d="M6.500 5.500L10 8l-3.500 2.500z" /></svg>
      <span className="ml-[5px]">今日直播</span>
      <Newspaper className="ml-3" size={16} strokeWidth={1.5} color="#1dbb5f" />
      <span className="ml-1">热点资讯</span>
      <svg className="ml-[17px]" width="14" height="14" viewBox="0 0 14 14" fill="none" stroke="#888"><circle cx="7" cy="7" r="5.500" /><path d="M7 4v6M4 7h6M2 12C0 9 7 0 13 1" /></svg>
      <svg className="ml-[23px]" width="14" height="14" viewBox="0 0 14 14" fill="none" stroke="#888"><path d="M13 1c-5 0-7 3-9 6l3 3c3-2 6-4 6-9zM4 7H1l3-3h2M7 10v3l3-3V8M1 13l3-3" /></svg>
      <ArrowDown className="ml-[18px]" size={16} strokeWidth={1.5} />
      <span className="ml-1">下载</span>
      <svg className="ml-[15px]" width="14" height="14" viewBox="0 0 14 14" fill="none" stroke="#888"><path d="M2 8h10c0-7-9-7-10 0 0 6 8 6 9 3M1 12C0 8 8 0 13 1" /></svg>
      <svg className="ml-6" width="13" height="13" viewBox="0 0 13 13" fill="none" stroke="#888"><path d="M1.500 4.500h8v8h-8zM3 1.500h9.500V11" /></svg>
      <Volume2 className="ml-[22px]" size={16} strokeWidth={1.3} />
      <Search className="ml-[19px]" size={13} strokeWidth={1.5} />
      <span className="ml-1.5 w-8 font-['Noto_Sans']">105%</span>
    </div>
  </footer>
);

const GSwirl = ({ color, size }: { color: string; size: number }) => (
  <svg width={size} height={size} viewBox="0 0 24 24" fill="none" stroke={color}>
    <path d="M24 3c-4 2-8-1-13 0C2 5 0 16 7 21c7 4 15-1 14-9" strokeWidth="3" />
    <path d="M17 7c-6-2-11 3-8 8 3 3 8 1 8-3h-4" strokeWidth="2.500" />
  </svg>
);

const EMark = ({ color, swoosh }: { color: string; swoosh: string }) => (
  <svg width="24" height="24" viewBox="0 0 24 24" fill="none">
    <path d="M6 12.500h14.500c0-10-15-10-15 0 0 10 12 10 14 4" stroke={color} strokeWidth="4" />
    <path d="M3 22C-2 16 12 0 21 2c1 0 1 2 0 4" stroke={swoosh} strokeWidth="2" />
  </svg>
);

const RUNNING = [
  <svg key="files" width="22" height="20" viewBox="0 0 22 20"><path d="M0 1h8l2 3h12v15H0z" fill="#fbd670" /><path d="M0 6h22v13H0z" fill="#fde596" /><path d="M4 11h14v8h-3v-4H7v4H4z" fill="#38a9e0" /></svg>,
  <svg key="glodon" width="24" height="24" viewBox="0 0 24 24" fill="none">
    <path d="M24 3c-4 2-8-1-13 0C1 5 1 16 7 20c7 4 14-1 13-8" stroke="#1f9af0" strokeWidth="5" />
    <path d="M16 8c-5-1-8 3-6 6 2 2 5 1 6-2" stroke="#7fd4ff" strokeWidth="2" />
  </svg>,
  <svg key="reader" width="24" height="24" viewBox="0 0 24 24"><rect width="24" height="24" rx="3" fill="#1d6fd0" /><path d="M3 8l9 2 9-2v12l-9 1-9-1z" fill="#f6f1e4" /><path d="M12 10v11M5 12h5M5 15h5" stroke="#999" /><circle cx="15" cy="8" r="4" fill="#b5dcff" stroke="#ddd" /><path d="M18 11l4 4" stroke="#c8742c" strokeWidth="2" /></svg>,
  <svg key="anchor" width="24" height="24" viewBox="0 0 24 24" fill="none"><rect width="24" height="24" rx="4" fill="#0b93f5" /><path d="M15 6c0-3-3-2-3 1v10c0 3-3 3-3 1M5 11c0 4 7 4 7 0M19 11c0 4-7 4-7 0" stroke="#fff" strokeWidth="2" strokeLinecap="round" /></svg>,
  <svg key="note" width="24" height="24" viewBox="0 0 24 24"><rect width="24" height="24" rx="2" fill="#f0941c" /><path d="M4 6h13v15l-11-1z" fill="#fdf6e0" /><path d="M7 10h7M7 13h6M7 16h7" stroke="#777" /><path d="M22 2l-9 12-1 3 3-2 8-12z" fill="#8c4415" /></svg>,
];

const Taskbar = () => (
  <div className="flex h-10 shrink-0 items-center bg-[#020c0f] text-xs text-white">
    <button aria-label="开始" className="grid h-10 w-12 shrink-0 place-items-center bg-black">
      <svg width="16" height="16" viewBox="0 0 16 16" fill="#fff"><path d="M0 2l6.500-1v6.500H0zM7.500 1L16 0v7.500H7.500zM0 8.500h6.500V15L0 14zM7.500 8.500H16V16l-8.500-1z" /></svg>
    </button>
    <div className="flex h-10 w-[344px] shrink-0 items-center bg-[#333] pl-[9px] pr-3.5">
      <span className="size-[22px] rounded-full border-[3px] border-white" />
      <input aria-label="搜索" placeholder="在这里输入你要搜索的内容" className="ml-[5px] flex-1 text-sm outline-none placeholder:text-[#9a9a9a]" />
      <Mic size={16} strokeWidth={1.3} color="#aaa" />
    </div>
    <button aria-label="任务视图" className="ml-3.5">
      <svg width="20" height="16" viewBox="0 0 20 16" fill="none" stroke="#fff" strokeWidth="1.200"><path d="M4.500 1h11v14h-11zM3 3H1v10h2M17 3h2v10h-2" /></svg>
    </button>
    <button aria-label="应用" className="ml-[29px]">
      <svg width="22" height="22" viewBox="0 0 22 22" fill="#e4e4e4">
        <path d="M6 0h2c2 0 2.500 1 2.500 3v7.500C5 10 0 9 0 5.500S2 0 6 0z" />
        <path d="M22 6v2c0 2-1 2.500-3 2.500h-7.500C12 5 13 0 16.500 0S22 2 22 6z" />
        <path d="M16 22h-2c-2 0-2.500-1-2.500-3v-7.500C17 12 22 13 22 16.500S20 22 16 22z" />
        <path d="M0 16v-2c0-2 1-2.500 3-2.500h7.500C10 17 9 22 5.500 22S0 20 0 16z" />
      </svg>
    </button>
    <button aria-label="浏览器" className="ml-[29px]"><EMark color="#e4e4e4" swoosh="#e4e4e4" /></button>
    <button aria-label="广联达" className="ml-7"><GSwirl color="#e4e4e4" size={19} /></button>
    <button aria-label="Edge" className="ml-[31px]">
      <svg width="21" height="22" viewBox="0 0 21 22"><path d="M0 10C1 3 6 0 11 0c7 0 9 5 9 9v3H7c0 6 7 7 12 4v4.500C11 24 3 21 3 13c0-4 2-7 5-8-3 0-6 2-8 5zM7 8.500h7c0-5-6-5-7 0z" fill="#0a78d7" fillRule="evenodd" /></svg>
    </button>
    <button aria-label="IE" className="ml-5"><EMark color="#58b7f0" swoosh="#f5c52c" /></button>
    <div className="ml-[14px] flex gap-2">
      {RUNNING.map((icon, i) => <button key={i} aria-label="窗口" className="grid h-10 w-[34px] shrink-0 place-items-center border-b-2 border-[#76b9ed] pt-0.5">{icon}</button>)}
    </div>
    <button aria-label="360浏览器" className="ml-1 grid h-10 w-[41px] shrink-0 place-items-center border-b-2 border-[#76b9ed] bg-[#334044] pt-0.5">
      <svg width="24" height="24" viewBox="0 0 24 24" fill="none"><circle cx="12" cy="12" r="10.500" fill="#58bd1c" stroke="#fff" strokeWidth="1.500" /><path d="M6 12h12c0-8-11-8-12 0 0 7 9 7 11 3" stroke="#fff" strokeWidth="3" /><path d="M2 20C2 12 14 1 22 1" stroke="#58bd1c" strokeWidth="1.500" /></svg>
    </button>
    <div className="ml-auto flex shrink-0 items-center whitespace-nowrap pr-1">
      <span>链接</span>
      <span className="ml-[19px] w-12 text-center leading-[17px]">11%<br />CPU使用</span>
      <ChevronUp className="ml-[17px]" size={18} strokeWidth={1.5} />
      <svg className="ml-[7px]" width="17" height="14" viewBox="0 0 17 14" fill="none" stroke="#fff"><path d="M5 4.500h10v7H5zM16 6v4M2 1v3M5 1v3M1 4h5v3H1zM3.500 7v4H5" /><path d="M7 6h7v4H7z" fill="#fff" stroke="none" /></svg>
      <svg className="ml-2.5" width="13" height="14" viewBox="0 0 13 14" fill="none" stroke="#fff"><path d="M1 12C1 6 6 1 12 1M4 13c0-5 3-8 8-8M7 13c0-3 2-5 5-5" /><circle cx="11" cy="12" r="1.500" fill="#fff" /></svg>
      <Volume2 className="ml-[7px]" size={18} strokeWidth={1.3} />
      <svg className="ml-1.5" width="23" height="14" viewBox="0 0 23 14" fill="none" stroke="#fff"><path d="M.5.5h22v13H.5z" /><path d="M3 4h17M3 7h17" strokeDasharray="1.500 1.500" /><path d="M6 10.500h11" /></svg>
      <span className="ml-2.5 w-3 font-['Noto_Sans'] text-[19px] leading-6">A</span>
      <span className="ml-4 grid h-[15px] w-[15px] -rotate-12 place-items-center rounded-xs bg-[#f04d14] font-['Liberation_Sans'] text-sm font-bold leading-none">S</span>
      <span className="ml-3.5 w-[62px] text-center leading-[18px]">17:14<br />2018/4/28</span>
      <svg className="ml-[17px] mr-5" width="16" height="16" viewBox="0 0 16 16" fill="none" stroke="#fff"><path d="M.5 1.500h15v11h-5l-2.500 3-2.500-3h-5z" /></svg>
      <span className="h-10 w-px bg-[#666]" />
    </div>
  </div>
);

export default function App() {
  return (
    <div className="relative flex h-screen flex-col overflow-hidden bg-white font-['Noto_Sans_CJK_SC',sans-serif]">
      <BrowserLogo />
      <TabStrip />
      <AddressBar />
      <BookmarkBar />
      <div className="flex min-h-0 flex-1">
        <Sidebar />
        <div className="flex min-w-0 flex-1 flex-col">
          <div className="flex min-h-0 flex-1">
            <main className="relative min-w-0 flex-1 overflow-hidden">
              <DimmedPage />
              <div className="relative pl-[25px] pr-6 pt-[21px]"><Screenshot /></div>
              <FloatButtons />
            </main>
            <VerticalScroll />
          </div>
          <div className="flex h-[17px] shrink-0 items-center bg-[#f0f0f0] pl-1.5">
            <svg width="5" height="8"><path d="M5 0v8L0 4z" fill="#999" /></svg>
            <div className="ml-1.5 mr-4 h-[13px] flex-1 bg-[#c1c1c1]" />
            <svg width="5" height="8"><path d="M0 0v8l5-4z" fill="#444" /></svg>
            <span className="ml-1.5 h-full w-[17px] bg-[#dcdcdc]" />
          </div>
        </div>
      </div>
      <StatusBar />
      <Taskbar />
    </div>
  );
}
